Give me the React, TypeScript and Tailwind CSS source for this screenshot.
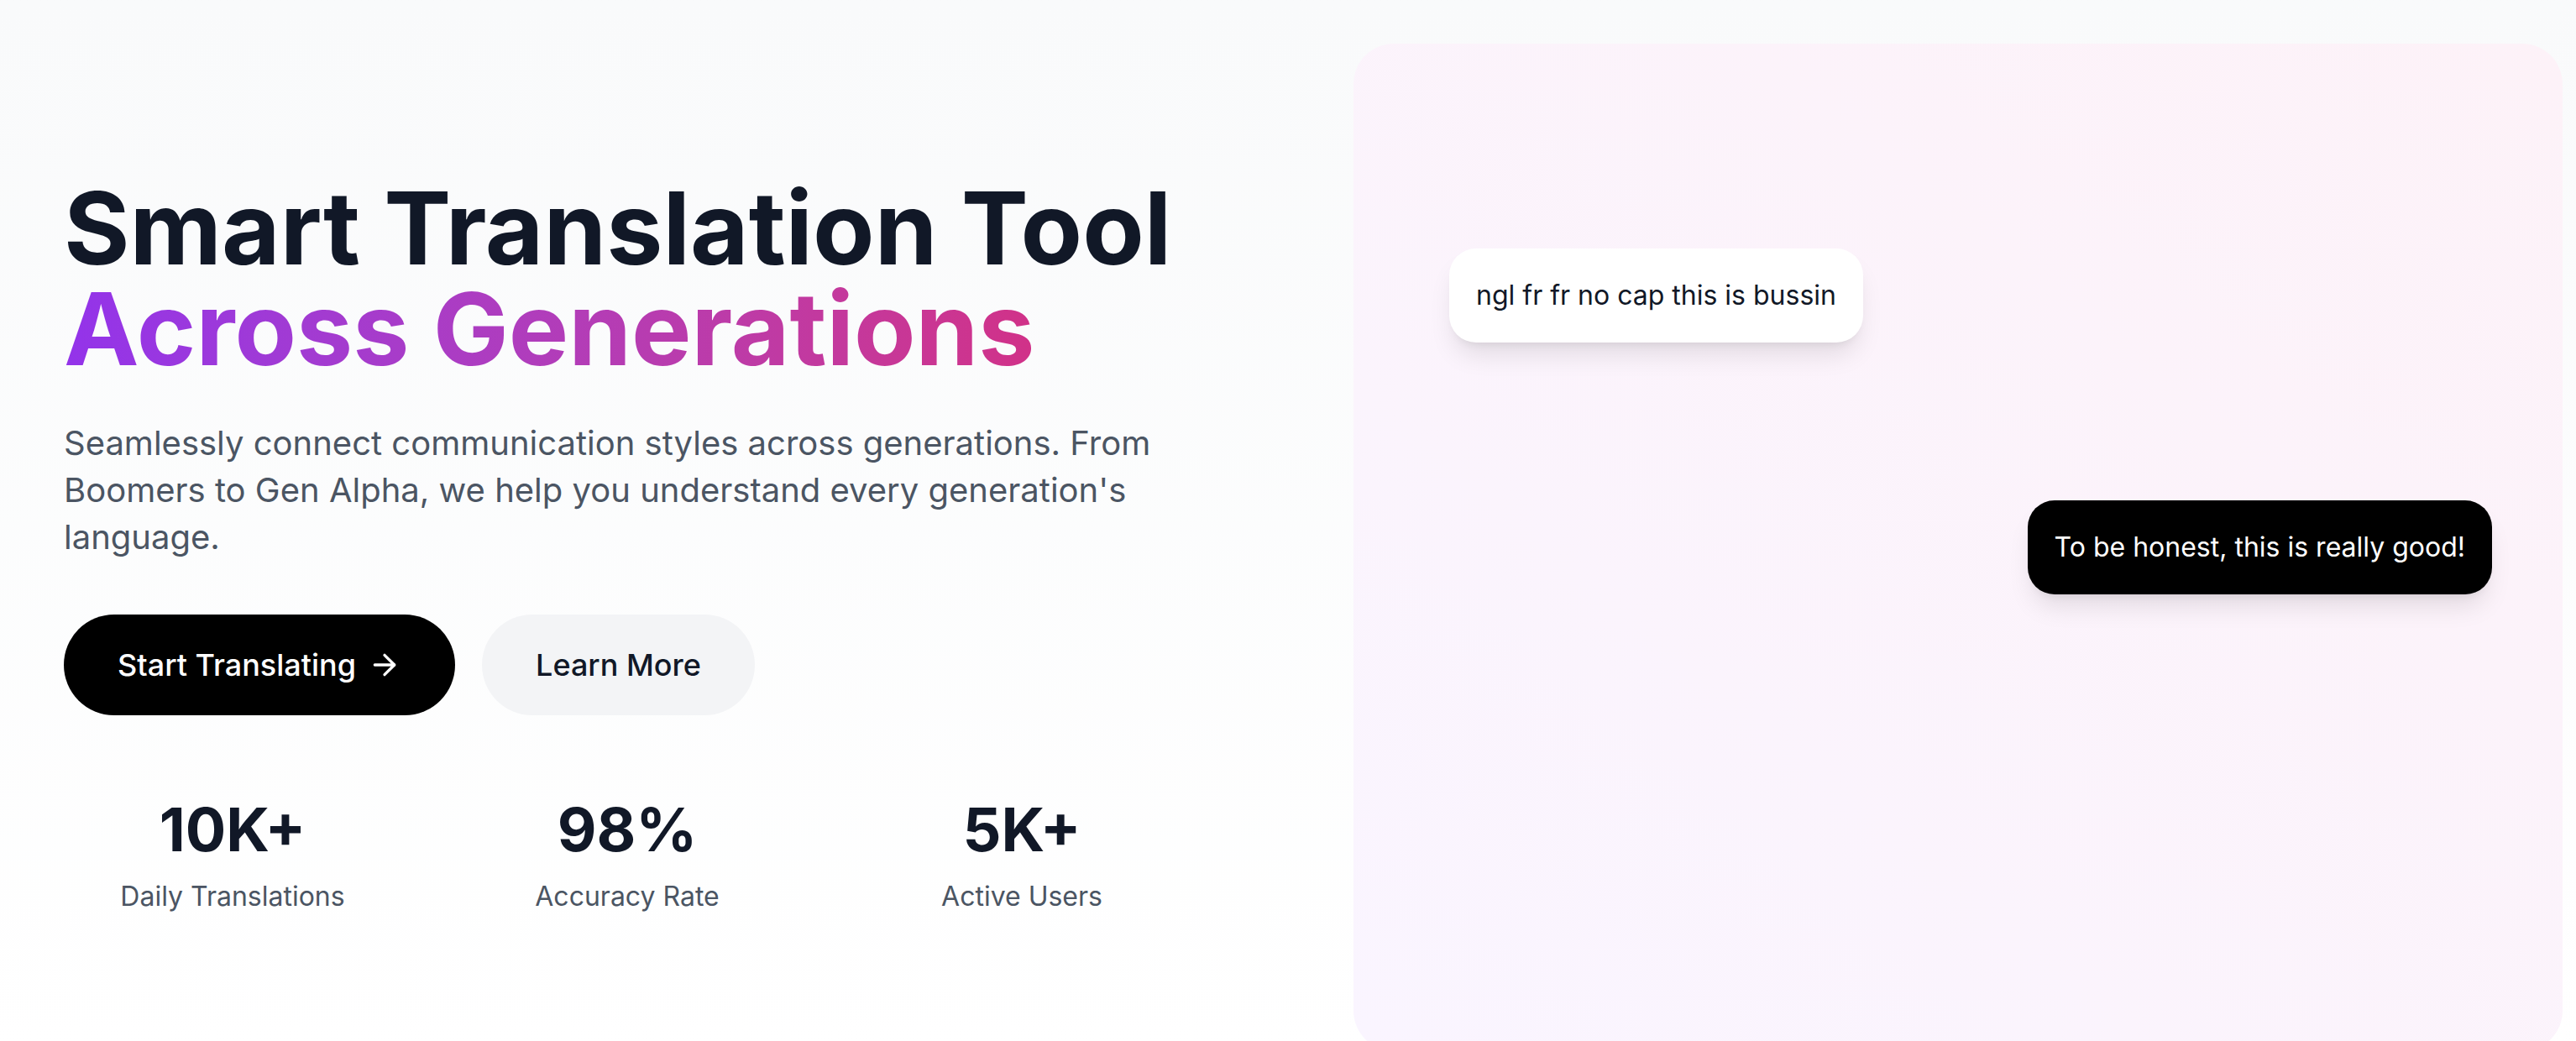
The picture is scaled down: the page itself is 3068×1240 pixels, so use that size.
import React from 'react';
import { ArrowRight } from 'lucide-react';

const stats = [
  { value: '10K+', label: 'Daily Translations' },
  { value: '98%', label: 'Accuracy Rate' },
  { value: '5K+', label: 'Active Users' },
];

const App: React.FC = () => {
  return (
    <div className="min-h-screen w-full overflow-hidden bg-gradient-to-b from-[#f9fafb] to-white font-['Inter','Noto_Sans',sans-serif]">
      <section className="flex items-center pl-[76px] pr-[16px] pt-[52px]">
        {/* Left: copy */}
        <div className="w-[1340px] shrink-0">
          <h1 className="text-[120px] leading-[120px] font-bold text-[#111827] mb-[48px]">
            Smart Translation Tool
            <span className="block bg-gradient-to-r from-[#9333ea] to-[#db2777] bg-clip-text text-transparent">
              Across Generations
            </span>
          </h1>
          <p className="text-[40px] leading-[56px] text-[#4b5563] max-w-[1344px]">
            Seamlessly connect communication styles across generations. From Boomers to Gen Alpha, we help you understand every generation's language.
          </p>

          <div className="mt-[64px] flex items-center gap-[32px]">
            <button className="flex items-center rounded-full bg-black px-[64px] py-[32px] text-[36px] leading-[56px] font-medium text-white">
              <span>Start Translating</span>
              <ArrowRight size={40} strokeWidth={2} className="ml-[14px]" />
            </button>
            <button className="rounded-full bg-[#f3f4f6] px-[64px] py-[32px] text-[36px] leading-[56px] font-medium text-[#111827]">
              Learn More
            </button>
          </div>

          <div className="mt-[96px] ml-[6px] grid w-[1330px] grid-cols-3 gap-[80px] text-center">
            {stats.map((s) => (
              <div key={s.label}>
                <div className="text-[72px] leading-[80px] font-bold text-[#111827]">{s.value}</div>
                <div className="mt-[16px] text-[32px] leading-[48px] text-[#4b5563]">{s.label}</div>
              </div>
            ))}
          </div>
        </div>

        {/* Right: preview canvas */}
        <div className="relative ml-auto h-[1200px] w-[1440px] shrink-0 rounded-[48px] bg-gradient-to-tr from-[#faf5ff] to-[#fdf2f8]">
          <div className="absolute left-[114px] top-[244px] rounded-[32px] bg-white px-[32px] py-[32px] text-[32px] leading-[48px] text-[#111827] shadow-[0_20px_30px_-6px_rgba(0,0,0,0.1),0_8px_12px_-8px_rgba(0,0,0,0.1)]">
            ngl fr fr no cap this is bussin
          </div>
          <div className="absolute right-[84px] top-[544px] rounded-[32px] bg-black px-[32px] py-[32px] text-[32px] leading-[48px] text-white shadow-[0_20px_30px_-6px_rgba(0,0,0,0.1),0_8px_12px_-8px_rgba(0,0,0,0.1)]">
            To be honest, this is really good!
          </div>
        </div>
      </section>
    </div>
  );
};

export default App;
